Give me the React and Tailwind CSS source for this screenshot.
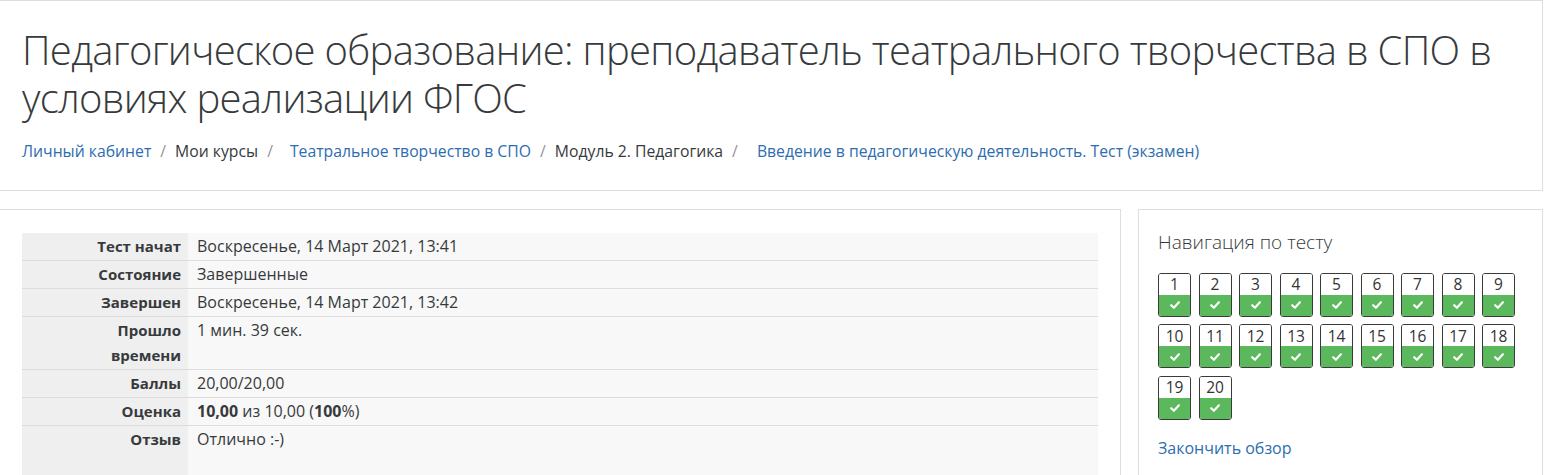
import React from 'react';

const rows = [
  { label: 'Тест начат', value: 'Воскресенье, 14 Март 2021, 13:41' },
  { label: 'Состояние', value: 'Завершенные' },
  { label: 'Завершен', value: 'Воскресенье, 14 Март 2021, 13:42' },
  { label: 'Прошло времени', value: '1 мин. 39 сек.', narrow: true },
  { label: 'Баллы', value: '20,00/20,00' },
  {
    label: 'Оценка',
    value: (
      <>
        <b className="font-bold">10,00</b> из 10,00 (<b className="font-bold">100</b>%)
      </>
    ),
  },
  { label: 'Отзыв', value: 'Отлично :-)', last: true },
];

const Check = () => (
  <svg width="10" height="8" viewBox="0 0 10 8" fill="none">
    <path d="M1.2 4.2 L3.9 6.8 L8.9 1.3" stroke="white" strokeWidth="2.1" strokeLinecap="round" strokeLinejoin="round" />
  </svg>
);

const Sep = () => <span className="mx-[9px] text-[#8f959a]">/</span>;

export default function App() {
  const questions = Array.from({ length: 20 }, (_, i) => i + 1);

  return (
    <div className="w-[1544px] bg-white pr-px text-[#373a3c]" style={{ fontFamily: '"Open Sans", "Noto Sans", sans-serif' }}>
      {/* page header */}
      <header className="border-y border-r border-[#dedede] px-[22px] pt-[25px] pb-[27px]">
        <h1 className="text-[40px] font-light leading-[48px] tracking-[-0.7px]">
          Педагогическое образование: преподаватель театрального творчества в СПО в условиях реализации ФГОС
        </h1>
        <nav className="mt-[18px] flex text-[15.75px] leading-[22.5px]">
          <a className="text-[#2d6db0]">Личный кабинет</a>
          <Sep />
          <span>Мои курсы</span>
          <Sep />
          <a className="ml-[8px] text-[#2d6db0]">Театральное творчество в СПО</a>
          <Sep />
          <span>Модуль 2. Педагогика</span>
          <Sep />
          <a className="ml-[10px] text-[#2d6db0]">Введение в педагогическую деятельность. Тест (экзамен)</a>
        </nav>
      </header>

      <div className="mt-[18px] flex gap-[17px]">
        {/* review summary */}
        <main className="w-[1121px] border-t border-r border-[#dedede] pl-[22px] pr-[22px] pt-[23px]">
          <table className="w-full border-collapse leading-[25px]">
            <tbody>
              {rows.map((r) => (
                <tr key={r.label} className={r.last ? '' : 'border-b border-[#dcdcdc]'}>
                  <th
                    className={`w-[166px] bg-[#efefef] pr-[7px] text-right align-top text-[15px] font-bold ${
                      r.last ? 'h-[50px] pt-px' : 'py-px'
                    } ${r.narrow ? 'pl-[60px]' : ''}`}
                  >
                    {r.label}
                  </th>
                  <td className={`bg-[#f8f8f8] pl-[9px] align-top text-[16px] ${r.last ? 'pt-px' : 'py-px'}`}>{r.value}</td>
                </tr>
              ))}
            </tbody>
          </table>
        </main>

        {/* quiz navigation */}
        <aside className="w-[405px] border-t border-x border-[#dedede] px-[19px] pt-[21px]">
          <h5 className="text-[19px] font-light leading-[23px]">Навигация по тесту</h5>
          <div className="mt-[19px] flex flex-wrap gap-x-[7.5px] gap-y-[7.5px]">
            {questions.map((n) => (
              <div key={n} className="flex h-[44px] w-[33px] flex-col overflow-hidden rounded-[3px] border border-[#3a3a3a]">
                <div className="flex h-[21px] items-center justify-center bg-white pt-[2px] text-[15.5px] leading-none text-[#333]">{n}</div>
                <div className="flex flex-1 items-center justify-center bg-[#5cb85c]">
                  <Check />
                </div>
              </div>
            ))}
          </div>
          <a className="mt-[17px] block text-[16px] leading-[22.5px] text-[#2d6db0]">Закончить обзор</a>
        </aside>
      </div>
    </div>
  );
}
